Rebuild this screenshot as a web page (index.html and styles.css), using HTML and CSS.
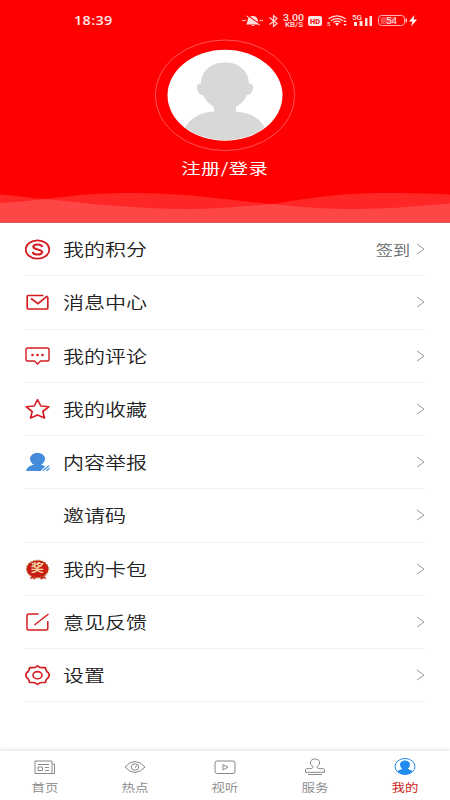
FILE: index.html
```html
<!DOCTYPE html>
<html lang="zh-CN">
<head>
<meta charset="utf-8">
<title>我的</title>
<link rel="stylesheet" href="styles.css">
</head>
<body>
<div class="app">
  <header class="hero">
    <div class="status">
      <span class="time">18:39</span>
      <svg class="indicators" width="180" height="20" viewBox="240 10 180 20" fill="none" stroke="#ffdcdc">
        <g fill="#ffdcdc" stroke="none">
          <path d="M246 24.500c2-1.500 1-5.500 3-7 1.500-2 6-2 7.500 0 2 1.500 1 5.500 3 7zM251 25h4q-2 2-4 0z"/>
          <circle cx="243" cy="20.500" r=".8"/><circle cx="245" cy="20.500" r=".8"/><circle cx="260.500" cy="20.500" r=".8"/><circle cx="262.300" cy="20.500" r=".7"/>
        </g>
        <path d="M247.500 15.500L261 25" stroke="red" stroke-width="1.200"/><path d="M246.500 15.800L260 25.300"/>
        <path d="M269.500 17.500l7.500 6-3.500 3v-11l3.500 3-7.500 6" stroke-width="1.200"/>
        <g fill="#ffe4e4" stroke="none" font-family="Roboto, sans-serif" font-weight="500">
          <text x="283" y="20.500" font-size="8.500" textLength="21" lengthAdjust="spacingAndGlyphs">3.00</text>
          <text x="285" y="27" font-size="6.500" textLength="18" lengthAdjust="spacingAndGlyphs">KB/S</text>
          <rect x="308" y="16" width="14" height="10" rx="2"/>
          <text x="310" y="23.800" font-size="7.500" textLength="10" lengthAdjust="spacingAndGlyphs" fill="#e00" font-weight="700">HD</text>
          <text x="327" y="26" font-size="6">5</text>
          <text x="352" y="20" font-size="7" textLength="10" lengthAdjust="spacingAndGlyphs">5G</text>
          <path d="M354 22h3v4h-3zM359.500 21h3v5h-3zM365 18h2.500v8H365zM369.500 16h2.500v10h-2.500z"/>
          <path d="M335 23.500q2-1.500 4 0l-2 2.500zM343.200 22l1.800-2 1.800 2zM343.200 24l1.800 2 1.800-2z"/>
        </g>
        <path d="M328.500 18.800q8.500-6 17 0M331 20.800q6-4.300 12 0M333.400 22.500q3.600-2.700 7.200 0" stroke-width="1.300"/>
        <rect x="378.500" y="15.500" width="26" height="10" rx="3" stroke="#ffb0b0"/>
        <rect x="380.500" y="17" width="13" height="7" rx="1" fill="#ff4545" stroke="none"/>
        <path d="M406.200 18.500v4" stroke-width="1.300"/>
        <text x="386" y="23.800" font-family="Roboto, sans-serif" font-size="8.500" textLength="11" lengthAdjust="spacingAndGlyphs" fill="#ffe4e4" stroke="none">54</text>
        <path d="M414.500 15l-5.500 6.500h3.500l-1.500 5 6-7h-3.500z" fill="#fff" stroke="none"/>
      </svg>
    </div>
    <svg class="avatar" width="142" height="114" viewBox="154 38 142 114">
      <defs><clipPath id="face"><ellipse cx="225" cy="95.300" rx="57" ry="44.800"/></clipPath></defs>
      <ellipse cx="225" cy="95.300" rx="69.700" ry="55.300" fill="none" stroke="#ff6a6a" stroke-width=".8"/>
      <ellipse cx="225" cy="95.300" rx="57.500" ry="45.500" fill="#fff"/>
      <g fill="#d8d8d8" clip-path="url(#face)">
        <path d="M201 84c0-13 10-21.500 24-21.500S249 71 249 84c3-1 5 2 4 5-1 4-3 6-6 6-2 5-6 9-11 12v4.500c14 1 24 6.500 29 16.500-10 9-23 12.300-40 12.300S195 137 185 128c5-10 15-15.500 29-16.500V107c-5-3-9-7-11-12-3 0-5-2-6-6-1-3 1-6 4-5z"/>
      </g>
    </svg>
    <div class="login"><span>注册/登录</span></div>
    <svg class="waves" width="450" height="31" viewBox="0 192 450 31">
      <path d="M0 203C16 202 31 200.500 47 199C75 195 100 193 130 193C190 193 225 200 272 204C310 208 330 209 355 209C390 209 418 206 450 203.500V223H0z"/>
      <path d="M0 194.500C16 195.500 31 198 47 199.300C95 204 135 209 185 209C220 209 245 206 272 204C310 198 340 193 385 193C410 193 430 193.300 450 194.500V223H0z"/>
      <path class="wave-edge" d="M0 222.500H450"/>
    </svg>
  </header>

  <main class="menu">
    <div class="row"><svg class="icon" viewBox="0 0 26 24"><ellipse cx="12.500" cy="12.500" rx="11.800" ry="9.200" stroke-width="1.700"/><path d="M17.300 10C16.800 6.800 8.300 6.500 8.300 9.800c0 3.500 8.800 1.800 8.800 5.300 0 3.400-9.100 3.200-9.300-.2" stroke-width="2.100"/></svg><span class="label">我的积分</span><span class="note">签到</span><svg class="chevron" viewBox="0 0 9 12"><path d="M1 1l7 5-7 5"/></svg></div>
    <div class="row"><svg class="icon" viewBox="0 0 26 24"><path d="M18.500 5.500H3.200q-1 0-1 1v11.500q0 1 1 1h18.600q1 0 1-1V7" stroke-width="1.700"/><path d="M6 8.500l7 5.200L22.500 5.800" stroke-width="1.700"/></svg><span class="label">消息中心</span><svg class="chevron" viewBox="0 0 9 12"><path d="M1 1l7 5-7 5"/></svg></div>
    <div class="row"><svg class="icon" viewBox="0 0 26 24"><path d="M3 4h19q2 0 2 1.500v10q0 1.500-2 1.500h-6.500l-3 3-3-3H3q-2 0-2-1.500v-10Q1 4 3 4z" stroke-width="1.400"/><g class="solid"><circle cx="7.500" cy="11" r="1.300"/><circle cx="12.500" cy="11" r="1.300"/><circle cx="17.500" cy="11" r="1.300"/></g></svg><span class="label">我的评论</span><svg class="chevron" viewBox="0 0 9 12"><path d="M1 1l7 5-7 5"/></svg></div>
    <div class="row"><svg class="icon star" viewBox="0 0 26 24"><path d="M12.500 2.700l3.300 6.300 8 .8-6 4.700 1.700 6.500-7-3-7 3 1.700-6.500-6-4.700 8-.8z" stroke-width="1.600" stroke-linejoin="round"/></svg><span class="label">我的收藏</span><svg class="chevron" viewBox="0 0 9 12"><path d="M1 1l7 5-7 5"/></svg></div>
    <div class="row"><svg class="icon person" viewBox="0 0 26 24"><ellipse cx="12.500" cy="9" rx="7.500" ry="6.300"/><path d="M1.200 21c0-3.500 4-5.800 8-6.600h6c2 .4 3.500 1 5 2l-4.500 4.600z"/><path class="slash" d="M18 20.800l6-5M21.500 20.800l3-2.500"/></svg><span class="label">内容举报</span><svg class="chevron" viewBox="0 0 9 12"><path d="M1 1l7 5-7 5"/></svg></div>
    <div class="row"><span class="icon"></span><span class="label">邀请码</span><svg class="chevron" viewBox="0 0 9 12"><path d="M1 1l7 5-7 5"/></svg></div>
    <div class="row"><svg class="icon medal" viewBox="0 0 26 24"><path class="ribbon" d="M8 17l-3.500 5 3.500-.8 1.500 1.500 3-4 4 4 1.500-1.500 3.500.8-3.500-5z"/><ellipse class="scallop" cx="12.500" cy="12" rx="11" ry="8.800"/><ellipse class="disc" cx="12.500" cy="12" rx="9.800" ry="7.700"/><text x="10.400" y="15.500" text-anchor="middle">奖</text></svg><span class="label">我的卡包</span><svg class="chevron" viewBox="0 0 9 12"><path d="M1 1l7 5-7 5"/></svg></div>
    <div class="row"><svg class="icon" viewBox="0 0 26 24"><path d="M13.500 4H4Q2 4 2 5.500v13Q2 20 4 20h16.800q2 0 2-1.500V11M9.500 15L23.500 4" stroke-width="1.500"/></svg><span class="label">意见反馈</span><svg class="chevron" viewBox="0 0 9 12"><path d="M1 1l7 5-7 5"/></svg></div>
    <div class="row"><svg class="icon" viewBox="0 0 26 24"><path d="M12.500 2.800q2 2 4.500 1.900h3.500q.2 2.300 1.200 3.600 2.300 1.500 2.600 3.900-.3 2.400-2.600 3.900-1 1.300-1.200 3.400H17q-2.500 0-4.500 2-2-2-4.500-2H4.500q-.2-2.100-1.200-3.400Q1 14.600.8 12.200 1 9.800 3.300 8.300 4.300 7 4.500 4.700H8q2.500.1 4.500-1.900z" stroke-width="1.700" stroke-linejoin="round"/><ellipse cx="12.500" cy="12.200" rx="4.500" ry="3.600" stroke-width="1.600"/></svg><span class="label">设置</span><svg class="chevron" viewBox="0 0 9 12"><path d="M1 1l7 5-7 5"/></svg></div>
  </main>

  <nav class="tabs">
    <div class="tab"><svg viewBox="0 0 24 20"><path d="M2 4h17v12.500H2zM19.500 7h2v9.500h-2.500M5 7.500h11M5 10h4.500v3.500H5zM12 10.500h4M12 13.500h4"/></svg><span>首页</span></div>
    <div class="tab"><svg viewBox="0 0 24 20"><path d="M2 10Q12-1 22 10Q12 21 2 10z"/><ellipse cx="12" cy="10" rx="3.800" ry="3.200"/><path d="M12 10.500q1.500-.5 1.500-2"/></svg><span>热点</span></div>
    <div class="tab"><svg viewBox="0 0 24 20"><rect x="2" y="4" width="20" height="12.500" rx="2"/><path d="M10 7.500v5.500l5-2.750z"/></svg><span>视听</span></div>
    <div class="tab"><svg viewBox="0 0 24 20"><path d="M10 9.500C5.500 7 7 2 12 2s6.500 5 2 7.500c0 1.500 1 2.200 3 2.200h3.500q1 0 1 1v2.600h-19v-2.600q0-1 1-1H7c2 0 3-.7 3-2.200zM5 17.500h14"/></svg><span>服务</span></div>
    <div class="tab active"><svg viewBox="0 0 24 20"><ellipse cx="12" cy="9.500" rx="10" ry="8"/><path class="solid" d="M7 7.500C7 2 17 2 17 7.500c0 2-1 3-2 4 1 1.500 3.500 1.500 4.500 2.500-3 4.500-12 4.500-15 0 1-1 3.500-1 4.500-2.500-1-1-2-2-2-4z"/></svg><span>我的</span></div>
  </nav>
</div>
</body>
</html>
```

FILE: styles.css
```css
* {
  box-sizing: border-box;
}

body {
  margin: 0;
  background: #fff;
  color: #222;
  font-family: "Noto Sans CJK SC", sans-serif;
}

.app {
  display: flex;
  flex-direction: column;
  width: 450px;
  height: 800px;
  overflow: hidden;
}

.hero {
  display: flex;
  flex-direction: column;
  align-items: center;
  height: 223px;
  flex: none;
  background: #f00;
}

.status {
  display: flex;
  justify-content: space-between;
  align-items: flex-start;
  width: 100%;
  height: 38px;
  padding: 10px 30px 0 74px;
}

.time {
  color: #ffe8e8;
  font: 600 12px/21px "Open Sans", sans-serif;
  letter-spacing: 0.3px;
  transform: scaleX(1.2);
  transform-origin: left;
}

.avatar {
  flex: none;
}

.login {
  height: 34px;
  margin-top: 4px;
  color: #fff;
  font-size: 15px;
  line-height: 24px;
}

.login span {
  display: inline-block;
  font-weight: 400;
  letter-spacing: 0.3px;
  transform: scaleX(1.29);
}

.waves {
  display: block;
  margin-top: auto;
  fill: #fff;
  fill-opacity: 0.15;
}

.wave-edge {
  stroke: #d85560;
  stroke-width: 1;
}

.menu {
  flex: 1;
  padding: 0 25px;
}

.row {
  display: flex;
  align-items: center;
  height: 53.25px;
  border-bottom: 1px solid #f0f0f0;
}

.icon {
  flex: none;
  width: 26px;
  height: 24px;
  margin-right: 12px;
  fill: none;
  stroke: #d51c20;
}

.icon .solid {
  fill: #d51c20;
  stroke: none;
}

.icon.person {
  fill: #448ddd;
  stroke: none;
}

.person .slash {
  stroke: #448ddd;
  stroke-width: 1.2;
}

.icon.medal {
  stroke: none;
}

.ribbon {
  fill: #c9201c;
}

.scallop {
  fill: #c81d18;
  stroke: #b98532;
  stroke-width: 1.2;
  stroke-dasharray: 1.5 1.5;
}

.disc {
  fill: #c81d18;
}

.medal text {
  fill: #f6d9a0;
  font-size: 11px;
  font-weight: 700;
  transform: scaleX(1.2);
}

.label {
  font-size: 17px;
  line-height: 24px;
  font-weight: 350;
  transform: scaleX(1.235);
  transform-origin: left;
}

.note {
  margin-left: auto;
  margin-right: 6px;
  color: #666;
  font-size: 14px;
  font-weight: 350;
  transform: scaleX(1.22);
  transform-origin: right;
}

.chevron {
  width: 9px;
  height: 12px;
  margin-left: auto;
  fill: none;
  stroke: #999;
}

.note + .chevron {
  margin-left: 0;
}

.tabs {
  display: grid;
  grid-template-columns: repeat(5, 1fr);
  height: 49px;
  flex: none;
  background: #fff;
  box-shadow: 0 -1px 4px rgba(0, 0, 0, 0.13);
}

.tab {
  display: flex;
  flex-direction: column;
  align-items: center;
  padding-top: 6px;
  color: #888;
}

.tab svg {
  width: 24px;
  height: 20px;
  fill: none;
  stroke: #888;
}

.tab span {
  margin-top: 2px;
  font-size: 11px;
  line-height: 16px;
  font-weight: 350;
  transform: scaleX(1.22);
}

.tab.active {
  color: #c91c20;
}

.tab.active svg {
  stroke: #218bef;
}

.tab.active .solid {
  fill: #218bef;
  stroke: none;
}

.tab.active span {
  font-weight: 400;
}
```
